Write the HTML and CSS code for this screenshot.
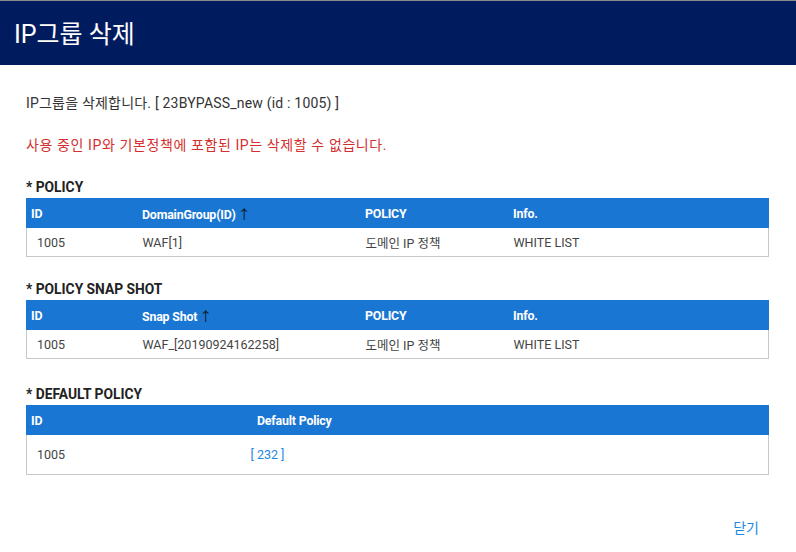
FILE: index.html
```html
<!DOCTYPE html>
<html lang="ko">
<head>
<meta charset="utf-8">
<link rel="stylesheet" href="styles.css">
</head>
<body>
<div class="dialog">
  <header class="dlg-header"><h1>IP그룹 삭제</h1></header>
  <main class="dlg-body">
    <p class="msg">IP그룹을 삭제합니다. [ 23BYPASS_new (id : 1005) ]</p>
    <p class="warn">사용 중인 IP와 기본정책에 포함된 IP는 삭제할 수 없습니다.</p>

    <section class="sec sec1">
      <h2>* POLICY</h2>
      <table class="grid">
        <colgroup><col class="c1"><col class="c2"><col class="c3"><col></colgroup>
        <thead><tr><th>ID</th><th>DomainGroup(ID)<span class="arrow">↑</span></th><th>POLICY</th><th>Info.</th></tr></thead>
        <tbody><tr><td class="first">1005</td><td>WAF[1]</td><td>도메인 IP 정책</td><td>WHITE LIST</td></tr></tbody>
      </table>
    </section>

    <section class="sec sec2">
      <h2>* POLICY SNAP SHOT</h2>
      <table class="grid">
        <colgroup><col class="c1"><col class="c2"><col class="c3"><col></colgroup>
        <thead><tr><th>ID</th><th>Snap Shot<span class="arrow">↑</span></th><th>POLICY</th><th>Info.</th></tr></thead>
        <tbody><tr><td class="first">1005</td><td>WAF_[20190924162258]</td><td>도메인 IP 정책</td><td>WHITE LIST</td></tr></tbody>
      </table>
    </section>

    <section class="sec sec3">
      <h2>* DEFAULT POLICY</h2>
      <table class="grid grid-default">
        <colgroup><col class="d1"><col></colgroup>
        <thead><tr><th>ID</th><th class="dp">Default Policy</th></tr></thead>
        <tbody><tr><td class="first">1005</td><td class="link">[ 232 ]</td></tr></tbody>
      </table>
    </section>
  </main>
  <footer class="dlg-footer"><span class="close">닫기</span></footer>
</div>
</body>
</html>
```
FILE: styles.css
```css
html, body { margin: 0; padding: 0; background: #fff; }
body {
  font-family: Roboto, "Noto Sans CJK KR", sans-serif;
  color: #333;
  width: 796px;
  height: 552px;
  overflow: hidden;
}
.dialog { border-top: 1px solid #8a8a8a; }
.dlg-header {
  background: #001c5f;
  height: 64px;
  display: flex;
  align-items: center;
  padding-left: 14px;
}
.dlg-header h1 {
  margin: 0;
  color: #fff;
  font-size: 25px;
  font-weight: 400;
  position: relative;
  top: -1px;
}
.dlg-body { padding: 0 27px 0 26px; }
.msg { margin: 28px 0 0; font-size: 14px; line-height: 20px; color: #333; letter-spacing: 0.2px; }
.warn { margin: 22px 0 0; font-size: 14px; line-height: 20px; color: #d32f2f; letter-spacing: 0.6px; }
.sec h2 { margin: 0 0 3px; font-size: 13.8px; font-weight: 700; color: #222; line-height: 16px; }
.sec1 { margin-top: 24px; }
.sec2 { margin-top: 24px; }
.sec3 { margin-top: 27px; }
.grid {
  width: 743px;
  border-collapse: collapse;
  table-layout: fixed;
  font-size: 12.5px;
}
.grid col.c1 { width: 111px; }
.grid col.c2 { width: 223px; }
.grid col.c3 { width: 148px; }
.grid col.d1 { width: 224px; }
.grid th {
  background: #1976d2;
  color: #fff;
  text-align: left;
  font-weight: 700;
  height: 28px;
  padding: 0 0 0 4px;
  border: 1px solid #1976d2;
  font-size: 12.4px;
  letter-spacing: -0.2px;
}
.grid td {
  height: 28px;
  padding: 0 0 0 5px;
  border-top: 1px solid #c8c8c8;
  border-bottom: 1px solid #c8c8c8;
  font-size: 12.5px;
  color: #444;
}
.grid td:first-child { border-left: 1px solid #c8c8c8; }
.grid td:last-child { border-right: 1px solid #c8c8c8; }
.grid td.first { padding-left: 10px; }
.arrow { font-weight: 400; color: #111; font-size: 13px; margin-left: 2px; }
.grid-default th.dp { padding-left: 6px; }
.grid-default td { height: 38.5px; }
.grid-default td.link { color: #1e88e5; padding-left: 0; }
.dlg-footer {
  display: flex;
  justify-content: flex-end;
  padding: 43px 37px 0 0;
}
.close { color: #1e88e5; font-size: 14px; line-height: 20px; }
```
